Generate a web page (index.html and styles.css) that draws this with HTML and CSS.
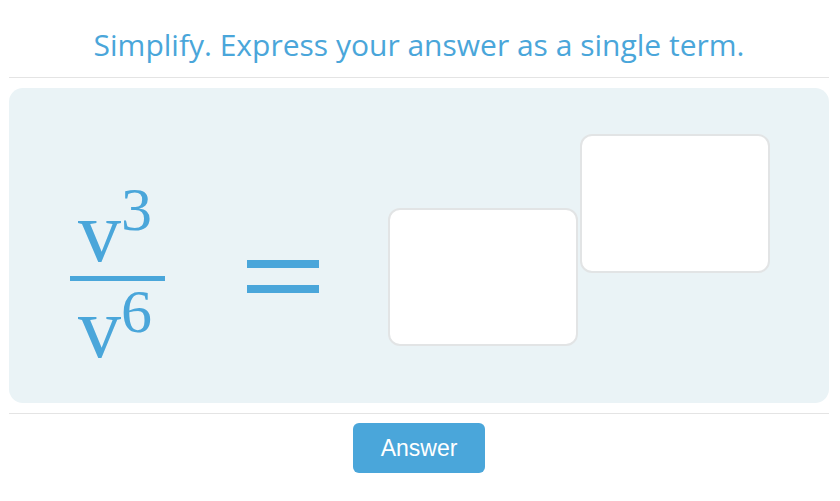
FILE: index.html
```html
<!DOCTYPE html>
<html lang="en">
<head>
    <meta charset="UTF-8">
    <meta name="viewport" content="width=device-width, initial-scale=1.0">
    <title>Simplify</title>
    <link rel="stylesheet" href="styles.css">
</head>
<body>
    <div class="page">
        <h1 class="prompt">Simplify. Express your answer as a single term.</h1>
        <hr class="divider">
        <div class="question">
            <div class="fraction">
                <div class="numerator">v<sup class="power-top">3</sup></div>
                <div class="denominator">v<sup class="power-bottom">6</sup></div>
            </div>
            <div class="equals"></div>
            <input type="text" class="answer-box base-box" aria-label="base">
            <input type="text" class="answer-box exponent-box" aria-label="exponent">
        </div>
        <hr class="divider">
        <div class="actions">
            <button class="answer-button">Answer</button>
        </div>
    </div>
</body>
</html>
```

FILE: styles.css
```css
body {
    margin: 0;
    background: #fff;
    font-family: "Open Sans", Lato, sans-serif;
}
.page {
    width: 820px;
    margin-left: 9px;
}
.prompt {
    margin: 0;
    height: 77px;
    padding-top: 27px;
    box-sizing: border-box;
    text-align: center;
    font-size: 30px;
    font-weight: 400;
    line-height: 36px;
    color: #4aa6da;
}
.divider {
    margin: 0;
    border: none;
    border-top: 1px solid #e4e4e4;
}
.question {
    display: flex;
    align-items: flex-start;
    height: 315px;
    margin: 10px 0;
    background: #eaf3f6;
    border-radius: 14px;
}
.fraction {
    width: 95px;
    margin: 100px 0 0 61px;
    font-family: "Liberation Serif", "Times New Roman", serif;
    color: #4aa6da;
}
.numerator,
.denominator {
    font-size: 86px;
    line-height: 88px;
    height: 88px;
    padding-left: 8px;
}
.numerator {
    border-bottom: 5px solid #4aa6da;
}
.denominator {
    margin-top: 3px;
}
.power-top,
.power-bottom {
    font-size: 62px;
    line-height: 0;
}
.power-top {
    vertical-align: 31px;
}
.power-bottom {
    vertical-align: 25px;
}
.equals {
    width: 72px;
    height: 33px;
    margin: 172px 0 0 82px;
    box-sizing: border-box;
    border-top: 8px solid #4aa6da;
    border-bottom: 8px solid #4aa6da;
}
.answer-box {
    width: 190px;
    box-sizing: border-box;
    background: #fff;
    border: 2px solid #e2e4e5;
    border-radius: 12px;
    padding: 0;
    outline: none;
}
.base-box {
    height: 138px;
    margin: 120px 0 0 69px;
}
.exponent-box {
    height: 139px;
    margin: 46px 0 0 2px;
}
.actions {
    display: flex;
    justify-content: center;
    padding-top: 9px;
}
.answer-button {
    width: 132px;
    height: 50px;
    border: none;
    border-radius: 6px;
    background: #4aa6da;
    color: #fff;
    font-family: "Liberation Sans", Arial, sans-serif;
    font-size: 23px;
    cursor: pointer;
}
```
